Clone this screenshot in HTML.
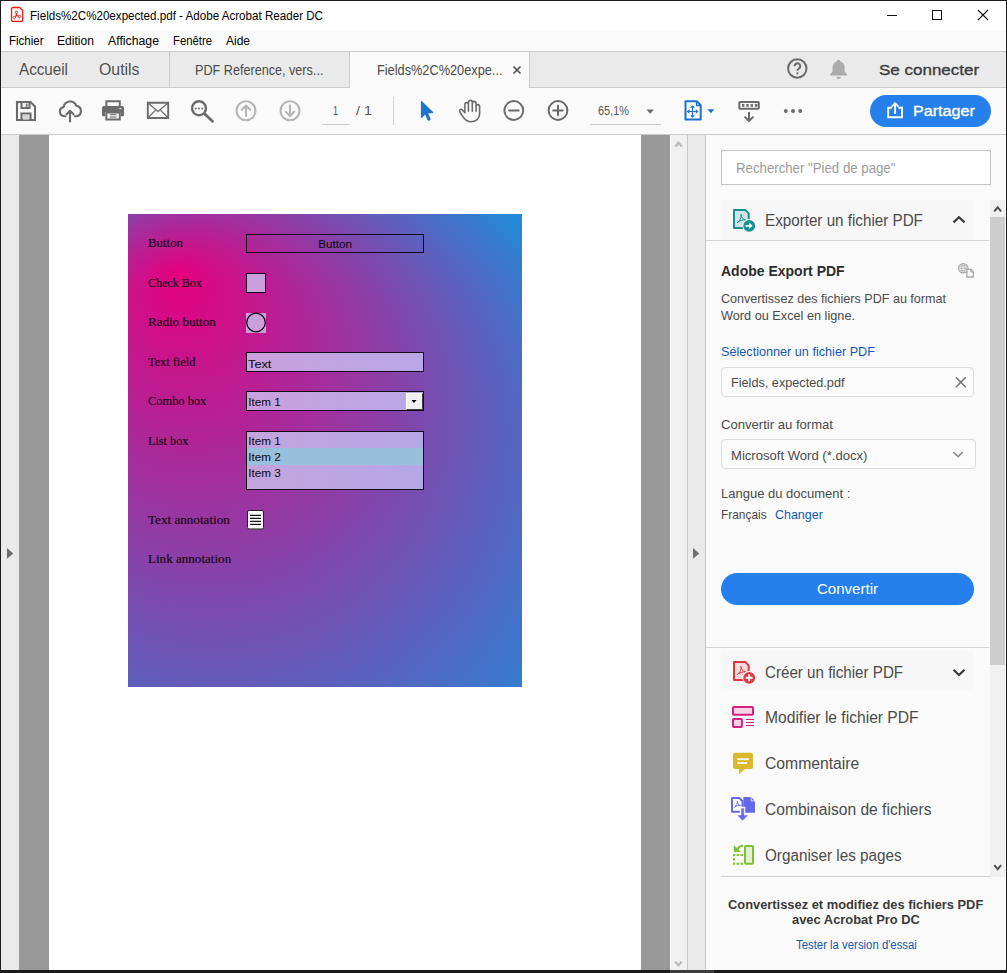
<!DOCTYPE html>
<html lang="fr">
<head>
<meta charset="utf-8">
<title>Fields%2C%20expected.pdf - Adobe Acrobat Reader DC</title>
<style>
html,body{margin:0;padding:0;}
body{width:1007px;height:973px;overflow:hidden;background:#1a1a1a;font-family:"Liberation Sans",Arial,sans-serif;}
#w{position:relative;width:1007px;height:973px;overflow:hidden;background:#1b1b1b;}
#w div,#w svg{position:absolute;}
.t{position:absolute;white-space:pre;line-height:1;transform-origin:0 50%;display:block;}
</style>
</head>
<body>
<div id="w">
<!-- window chrome -->
<div style="left:1px;top:1px;width:1005px;height:30px;background:#fff"></div>
<div style="left:1px;top:31px;width:1005px;height:20px;background:#fafafa"></div>
<div style="left:1px;top:51px;width:1005px;height:1px;background:#cbcbcb"></div>
<div style="left:1px;top:52px;width:1005px;height:35px;background:#eaeaea"></div>
<div style="left:1px;top:87px;width:1005px;height:1px;background:#cbcbcb"></div>
<div style="left:1px;top:88px;width:1005px;height:46px;background:#fafafa"></div>
<div style="left:1px;top:134px;width:1005px;height:1px;background:#cbcbcb"></div>
<div style="left:670px;top:970px;width:44px;height:3px;background:#3c3c3c"></div>
<!-- tabs -->
<div style="left:169px;top:52px;width:1px;height:35px;background:#cbcbcb"></div>
<div style="left:349px;top:52px;width:181px;height:36px;background:#cbcbcb"></div>
<div style="left:350px;top:52px;width:179px;height:36px;background:#fafafa"></div>
<!-- document area -->
<div style="left:1px;top:135px;width:18px;height:835px;background:#eaeaea"></div>
<div style="left:19px;top:135px;width:651px;height:835px;background:#999"></div>
<div style="left:49px;top:135px;width:592px;height:835px;background:#fff"></div>
<div style="left:670px;top:135px;width:17px;height:835px;background:#f0f0f0;border-left:1px solid #fbfbfb;box-sizing:border-box"></div>
<div style="left:687px;top:135px;width:1px;height:835px;background:#c8c8c8"></div>
<div style="left:688px;top:135px;width:17px;height:835px;background:#eaeaea"></div>
<div style="left:705px;top:135px;width:1px;height:835px;background:#c8c8c8"></div>
<div style="left:706px;top:135px;width:300px;height:835px;background:#fafafa"></div>
<!-- pdf page content -->
<svg style="left:128px;top:214px" width="394" height="473" viewBox="128 214 394 473">
<defs>
<radialGradient id="pg" gradientUnits="userSpaceOnUse" cx="240" cy="500" r="392" fx="176" fy="272">
<stop offset="0" stop-color="#e5007e"/>
<stop offset="1" stop-color="#2389d8"/>
</radialGradient>
</defs>
<rect x="128" y="214" width="394" height="473" fill="url(#pg)"/>
</svg>
<!-- form fields -->
<div style="left:246px;top:234px;width:176px;height:17px;border:1px solid #140a18"></div>
<div style="left:246px;top:273px;width:18px;height:18px;border:1px solid #140a18;background:#c9a0dc"></div>
<div style="left:246px;top:312.500px;width:20px;height:20px;background:#c9a0dc"></div>
<svg style="left:245px;top:311px" width="23" height="23" viewBox="245 311 23 23"><circle cx="256" cy="322.500" r="9.300" fill="none" stroke="#140a18" stroke-width="1.300"/></svg>
<div style="left:246px;top:352px;width:176px;height:18px;border:1px solid #140a18;background:linear-gradient(90deg,#c9a0dc,#b8a8e6)"></div>
<div style="left:246px;top:391px;width:176px;height:18px;border:1px solid #140a18;background:linear-gradient(90deg,#c9a0dc,#b8a8e6)"></div>
<div style="left:246px;top:431px;width:176px;height:57px;border:1px solid #140a18;background:linear-gradient(90deg,#c4a4de,#b4a8e6)"></div>
<div style="left:247px;top:448px;width:176px;height:17px;background:#97c0dc"></div>
<!-- title bar icon -->
<svg style="left:10px;top:6px" width="16" height="17" viewBox="0 0 16 17">
<path d="M3 1.500h6.700l3 3v9.400a1.500 1.500 0 0 1-1.500 1.500H3a1.500 1.500 0 0 1-1.500-1.500V3a1.500 1.500 0 0 1 1.500-1.500z" fill="#f6fbfb" stroke="#f81a10" stroke-width="1.300"/>
<g fill="none" stroke="#f81a10" stroke-width="0.900"><circle cx="6.450" cy="6.400" r="1.150"/><circle cx="4.400" cy="11.500" r="1.150"/><circle cx="9.500" cy="10.500" r="1.150"/><path d="M6.450 7.600v1.900M6.400 9.500L5.200 10.700M6.400 9.500l2.100.6" stroke-width="1.300"/></g>
</svg>
<!-- window controls -->
<svg style="left:880px;top:4px" width="120" height="24" viewBox="880 4 120 24" shape-rendering="crispEdges">
<rect x="887" y="15" width="10" height="1" fill="#111"/>
<rect x="932.500" y="10.500" width="9" height="9" fill="none" stroke="#111" stroke-width="1"/>
<path d="M978 10l10 10M988 10l-10 10" stroke="#111" stroke-width="1.100" shape-rendering="geometricPrecision" fill="none"/>
</svg>
<!-- tab close x -->
<svg style="left:512px;top:65px" width="10" height="10" viewBox="0 0 10 10"><path d="M1.500 1.500l7 7M8.500 1.500l-7 7" stroke="#555" stroke-width="1.700" fill="none"/></svg>
<!-- help + bell -->
<svg style="left:785px;top:56px" width="66" height="26" viewBox="785 56 66 26">
<circle cx="797.300" cy="68.500" r="9.200" fill="none" stroke="#6a6a6a" stroke-width="2"/>
<path d="M794.600 66.200a2.800 2.800 0 1 1 4.300 2.300c-1 .7-1.500 1.100-1.500 2.300" fill="none" stroke="#6a6a6a" stroke-width="2.100"/>
<circle cx="797.400" cy="73.300" r="1.100" fill="#6a6a6a"/>
<path d="M838.600 59.800c.9 0 1.500.6 1.500 1.400 2.900.8 4.500 3.300 4.500 6.200v4l2.600 3.200v.9h-17.200v-.9l2.600-3.200v-4c0-2.900 1.600-5.400 4.500-6.200 0-.8.600-1.400 1.500-1.400zM836.300 76.700h4.600a2.300 2.300 0 0 1-4.600 0z" fill="#ababab"/>
</svg>
<!-- toolbar icons -->
<svg style="left:1px;top:88px" width="1005" height="46" viewBox="1 88 1005 46">
<g fill="none" stroke="#6b6b6b" stroke-width="2.100" stroke-linejoin="round" stroke-linecap="round">
<!-- save -->
<path d="M17 102h13.500l4.500 4.500v13.500h-18z" stroke-linejoin="miter"/>
<path d="M21.500 102.500v5.500h8v-5.500" stroke-linejoin="miter"/>
<path d="M21.500 120v-6.500h9v6.500" stroke-linejoin="miter"/>
<!-- cloud upload -->
<path d="M65.500 116.200h-1.300a4.600 4.600 0 0 1-.6-9.100a6.600 6.600 0 0 1 12.700-1.300a5.300 5.300 0 0 1 .6 10.400h-2"/>
<path d="M70 121.500v-10M66.500 114.300l3.500-3.500l3.500 3.500"/>
<!-- mail -->
<path d="M147.800 102.700h20.400v15.300h-20.400z" stroke-linejoin="miter" stroke-width="1.900"/>
<path d="M148.300 103.200l9.700 8.300l9.700-8.300M148.300 117.500l7.200-7.400M167.700 117.500l-7.200-7.400" stroke-width="1.250"/>
<!-- magnifier -->
<circle cx="199" cy="108.300" r="7" stroke-width="2.400"/>
<path d="M204.300 113.600l8.200 7.700" stroke-width="2.700"/>
<!-- hand -->
<path d="M464.900 112.800V104.400a1.750 1.750 0 0 1 3.500 0M468.400 111.300V102.300a1.950 1.950 0 0 1 3.900 0V111.300M472.300 103.300a1.900 1.900 0 0 1 3.800 0V111.300M476.100 106.400a1.750 1.750 0 0 1 3.500 0V114C479.600 118.500 476 121.700 470.700 121.700C466.500 121.700 464.300 119.200 462.400 115.900L460 112C458.900 110.200 460.800 108.400 462.400 109.800L464.900 112.800" stroke-width="1.600"/>
<!-- zoom out/in -->
<circle cx="513.800" cy="110.500" r="9.400" stroke-width="2"/>
<path d="M509 110.500h9.600" stroke-width="2"/>
<circle cx="558" cy="110.500" r="9.400" stroke-width="2"/>
<path d="M553.200 110.500h9.600M558 105.700v9.600" stroke-width="2"/>
<!-- scrolling/keyboard icon -->
<rect x="739.300" y="102" width="19.500" height="6.800" rx="0.800" stroke-width="2"/>
<path d="M749 112v8.800M744.600 116.600l4.400 4.400l4.400-4.400" stroke-width="2" stroke-linejoin="miter" stroke-linecap="butt"/>
</g>
<g fill="#6e6e6e">
<rect x="25.800" y="103.500" width="1.700" height="3.300"/>
<rect x="23" y="115" width="6" height="4.600" fill="#d6d6d6"/>
<circle cx="195.800" cy="108.400" r="1"/><circle cx="199" cy="108.400" r="1"/><circle cx="202.200" cy="108.400" r="1"/>
<rect x="742" y="104" width="2.400" height="2.800"/><rect x="746.300" y="104" width="2.400" height="2.800"/><rect x="750.600" y="104" width="2.400" height="2.800"/><rect x="754.900" y="104" width="2.400" height="2.800"/>
<circle cx="785.800" cy="110.900" r="2"/><circle cx="793" cy="110.900" r="2"/><circle cx="800.200" cy="110.900" r="2"/>
<!-- printer -->
<path d="M106.400 106v-4.800h13.400v4.800" fill="none" stroke="#6b6b6b" stroke-width="2"/>
<path d="M104 106h18a2 2 0 0 1 2 2v7a1.200 1.200 0 0 1-1.200 1.200h-2v-4.300h-15.600v4.300h-2a1.200 1.200 0 0 1-1.200-1.200v-7a2 2 0 0 1 2-2z" fill="#6b6b6b"/>
<path d="M106.400 112.500h13.400v7h-13.400z" fill="#fff" stroke="#6b6b6b" stroke-width="2"/>
<rect x="109.700" y="114.200" width="6.800" height="1.100" fill="#6b6b6b"/><rect x="109.700" y="116.500" width="6.800" height="1.100" fill="#6b6b6b"/>
<rect x="119.300" y="108.200" width="2" height="1" fill="#fff"/>
<!-- zoom dropdown triangle -->
<path d="M646.500 109.500h7.400l-3.700 4.300z" fill="#6a6a6a"/>
</g>
<!-- up / down circles (disabled) -->
<g fill="none" stroke="#b6b6b6" stroke-width="2.100" stroke-linecap="round" stroke-linejoin="round">
<circle cx="246" cy="110.700" r="9.500"/><path d="M246 116v-10M241.800 109.700l4.200-4.200l4.200 4.200"/>
<circle cx="290" cy="110.700" r="9.500"/><path d="M290 105.500v10M285.800 111.800l4.200 4.200l4.200-4.200"/>
</g>
<!-- page number underline, separators -->
<rect x="322" y="124" width="28" height="1" fill="#c9c9c9"/>
<rect x="393" y="97" width="1" height="28" fill="#d2d2d2"/>
<rect x="590" y="124" width="71" height="1" fill="#c9c9c9"/>
<!-- select arrow -->
<path d="M420.900 101.200Q420.900 100.300 421.700 100.900L433.100 112Q433.700 112.900 432.600 113.100L428.200 113.400L430.600 118.800Q430.600 120.300 429.100 120.700Q427.800 120.700 427.300 119.800L425.200 114.500L421.800 117.900Q420.900 118.400 420.900 117.400Z" fill="#2073cc"/>
<!-- fit page icon -->
<g fill="none" stroke="#1f6fd1" stroke-width="2" stroke-linejoin="round">
<path d="M685.500 101.300h11.300l3.900 3.900v14.300h-15.200z" fill="#fafafa"/>
<path d="M696.500 101.800v3.700h3.700" stroke-width="1.300"/>
</g>
<g fill="none" stroke="#1f6fd1" stroke-width="1.200"><path d="M692.500 107v9M688.500 111.500h8.500"/></g>
<path d="M692.500 105l2.300 2.800h-4.600zM692.500 118l2.300-2.800h-4.600zM686.600 111.500l2.800-2.300v4.600zM698.600 111.500l-2.800-2.300v4.600z" fill="#1f6fd1"/>
<path d="M707.400 109.200h7l-3.500 4.100z" fill="#1f6fd1"/>
<!-- share button -->
<rect x="870" y="95" width="121" height="32" rx="16" fill="#2680eb"/>
<g fill="none" stroke="#fff" stroke-width="1.900" stroke-linejoin="miter">
<path d="M891.800 107.800h-3.600v9.400h13.800v-9.400h-3.600"/>
<path d="M895.100 114v-10M891.800 106.600l3.300-3.400l3.300 3.400" stroke-linejoin="round" stroke-linecap="butt"/>
</g>
</svg>
<!-- scrollbars & side arrows -->
<svg style="left:1px;top:135px" width="1005" height="835" viewBox="1 135 1005 835">
<path d="M675.300 146.500l3.200-3.800l3.200 3.800" fill="none" stroke="#b9b9b9" stroke-width="2.200"/>
<path d="M675.300 961.600l3.200 3.800l3.200-3.800" fill="none" stroke="#b9b9b9" stroke-width="2.200"/>
<path d="M7 548v10.800l6.200-5.400z" fill="#6e6e6e"/>
<path d="M693 548v10.800l6.200-5.400z" fill="#6e6e6e"/>
<!-- panel scrollbar -->
<rect x="990" y="200" width="15" height="677" fill="#f0f0f0"/>
<rect x="990" y="217" width="15" height="448" fill="#cdcdcd"/>
<path d="M994.300 211.300l3.400-4l3.400 4" fill="none" stroke="#505050" stroke-width="2"/>
<path d="M994.300 865.200l3.400 4l3.400-4" fill="none" stroke="#505050" stroke-width="2"/>
</svg>
<!-- right panel boxes -->
<div style="left:721px;top:150px;width:268px;height:33px;border:1px solid #c6c6c6;background:#fff"></div>
<div style="left:721px;top:200px;width:253px;height:40px;background:#f7f7f7"></div>
<div style="left:706px;top:240px;width:283px;height:1px;background:#d4d4d4"></div>
<div style="left:721px;top:367px;width:251px;height:28px;border:1px solid #dcdcdc;border-radius:4px;background:#fcfcfc"></div>
<div style="left:721px;top:439px;width:253px;height:28px;border:1px solid #dcdcdc;border-radius:4px;background:#fcfcfc"></div>
<div style="left:721px;top:573px;width:253px;height:32px;border-radius:16px;background:#2680eb"></div>
<div style="left:706px;top:647px;width:283px;height:1px;background:#d4d4d4"></div>
<div style="left:721px;top:651px;width:253px;height:40px;background:#f7f7f7"></div>
<div style="left:721px;top:876px;width:270px;height:1px;background:#d0d0d0"></div>
<!-- right panel icons -->
<svg style="left:706px;top:135px" width="284" height="835" viewBox="706 135 284 835">
<defs>
<g id="docpdf">
<path d="M734 209.900h11.200l3.500 3.500v14.500h-14.700z" stroke-width="2" stroke-linejoin="round"/>
</g>
<g id="acro" fill="none" stroke-width="1" stroke-linecap="round">
<path d="M741 214.500c.6 2.500-.6 5.500-3.600 8.200"/>
<path d="M741 214.800c.3 2.600 1.800 4.600 4.600 5.200"/>
<path d="M738.500 221.600c2.100-1.200 4.300-1.800 6.500-1.700"/>
</g>
</defs>
<!-- export -->
<use href="#docpdf" fill="#cfe4e6" stroke="#149090"/>
<use href="#acro" stroke="#149090"/>
<circle cx="749.200" cy="225.800" r="6.800" fill="#f7f7f7"/>
<circle cx="749.200" cy="225.800" r="5.900" fill="#149090"/>
<path d="M745.500 224.900h3.700v-2.100l3.500 3l-3.500 3v-2.100h-3.700z" fill="#fff"/>
<!-- chevrons -->
<path d="M953.500 222.400l5.500-5.200l5.500 5.200" fill="none" stroke="#3a3a3a" stroke-width="2.200"/>
<path d="M953.500 669.800l5.500 5.200l5.500-5.200" fill="none" stroke="#3a3a3a" stroke-width="2.200"/>
<path d="M953.300 452l4.800 4.600l4.800-4.600" fill="none" stroke="#8a8a8a" stroke-width="1.600"/>
<!-- file clear x -->
<path d="M955.800 377.300l10 10M965.800 377.300l-10 10" stroke="#6e6e6e" stroke-width="1.400" fill="none"/>
<!-- small globe/doc icon -->
<g fill="none" stroke="#a6a6a6" stroke-width="1.200">
<circle cx="963.300" cy="268.300" r="4.700"/>
<path d="M958.600 268.300h9.400M963.300 263.600c-2.400 3-2.400 6.400 0 9.400M963.300 263.600c2.400 3 2.400 6.400 0 9.400M959.500 265.900h7.600M959.500 270.700h7.600" stroke-width="0.800"/>
<path d="M966.900 269.300h4l2.400 2.400v5.300h-6.400z" fill="#fafafa" stroke-width="1.300"/>
<path d="M970.700 269.500v2.400h2.400" stroke-width="0.900"/>
</g>
<!-- create pdf -->
<g transform="translate(0,452)">
<use href="#docpdf" fill="#f7d9dc" stroke="#e0343f"/>
<use href="#acro" stroke="#e0343f"/>
<circle cx="749.200" cy="225.800" r="6.800" fill="#f7f7f7"/>
<circle cx="749.200" cy="225.800" r="5.900" fill="#e0343f"/>
<path d="M745.700 225.800h7M749.200 222.300v7" stroke="#fff" stroke-width="2" fill="none"/>
</g>
<!-- edit pdf -->
<g fill="#f5d5e6" stroke="#d6207f" stroke-width="2" stroke-linejoin="round">
<rect x="733" y="707" width="20" height="7.800" rx="0.800"/>
<rect x="733" y="719" width="8.900" height="8" rx="0.800"/>
</g>
<path d="M746 719.500h8M746 722.500h8M746 725.500h8" stroke="#d6207f" stroke-width="1.100" fill="none"/>
<!-- comment -->
<path d="M735 752.800h16a2 2 0 0 1 2 2v12.100a2 2 0 0 1-2 2h-6l-6 5.300v-5.300h-4a2 2 0 0 1-2-2v-12.100a2 2 0 0 1 2-2z" fill="#dcb92a"/>
<rect x="737.200" y="758.300" width="11.700" height="1.800" fill="#fff"/>
<rect x="737.200" y="762.200" width="9.800" height="1.800" fill="#fff"/>
<!-- combine -->
<g>
<path d="M732 798h7.300l3.200 3.200v10.600h-10.500z" fill="#fcfcfc" stroke="#6767ea" stroke-width="2" stroke-linejoin="round"/>
<path d="M743.300 797h7.200l4.500 4.500v11.300h-11.700z" fill="#6767ea"/>
<path d="M750.800 797v4.300h4.200z" fill="#fafafa"/>
<path d="M751.600 797.600v2.900h2.900z" fill="#6767ea"/>
<path d="M739.700 806.800h5.600v8.200h-5.600z" fill="#fafafa"/>
<path d="M741 808h3.200v7h4.200l-5.800 6l-5.800-6h4.200z" fill="#6767ea" stroke="#fafafa" stroke-width="0.600"/>
<g fill="none" stroke="#6767ea" stroke-width="0.900" stroke-linecap="round"><path d="M737.300 801.500c.4 1.800-.5 4-2.700 6"/><path d="M737.300 801.800c.2 1.900 1.300 3.300 3.300 3.700"/><path d="M735.500 806.600c1.500-.9 3.100-1.300 4.700-1.200"/></g>
</g>
<!-- organize -->
<rect x="745" y="846" width="8" height="17.800" rx="1" fill="#e4f0d4" stroke="#7ac231" stroke-width="2"/>
<path d="M733 854h2.200v2.200h-2.200zM736.600 854h2.600v2h-2.600zM740.500 854h2.500v2h-2.500zM733 858h2v2.600h-2zM733 862.600h2.200v2.200h-2.200zM736.600 862.800h2.600v2h-2.600zM740.500 862.800h2.500v2h-2.500z" fill="#7ac231"/>
<path d="M733.800 845v7h7l-2.300-2.300c1-1.700 2.500-2.800 4.500-3.100v-1.900c-2.700.2-4.800 1.400-6.300 3.300z" fill="#7ac231"/>
</svg>
<!-- combo box button, text annotation icon -->
<div style="left:406px;top:393px;width:15px;height:15px;background:#f0f0f0;border:1px solid;border-color:#fff #404040 #404040 #fff;box-sizing:content-box"></div>
<svg style="left:406px;top:393px" width="17" height="17" viewBox="0 0 17 17"><path d="M5.500 7h5l-2.500 3z" fill="#000"/></svg>
<svg style="left:245px;top:508px" width="22" height="24" viewBox="245 508 22 24">
<rect x="247.500" y="510.500" width="16" height="18.500" rx="1.500" fill="#fff" stroke="#222" stroke-width="1"/>
<path d="M248.500 529.300h14.500" stroke="#555" stroke-width="0.800" fill="none"/>
<path d="M250 515.300h11M250 518.300h11M250 521.300h11M250 524.300h11" stroke="#111" stroke-width="1.200" fill="none"/>
</svg>
<!-- texts -->
<span class="t" style="left:30.0px;top:10.00px;font-size:12px;color:#000;transform:scaleX(0.9675);">Fields%2C%20expected.pdf - Adobe Acrobat Reader DC</span>
<span class="t" style="left:8.5px;top:35.00px;font-size:12px;color:#000;transform:scaleX(0.9579);">Fichier</span>
<span class="t" style="left:57.0px;top:35.00px;font-size:12px;color:#000;transform:scaleX(1.0081);">Edition</span>
<span class="t" style="left:108.0px;top:35.00px;font-size:12px;color:#000;transform:scaleX(1.0235);">Affichage</span>
<span class="t" style="left:173.0px;top:35.00px;font-size:12px;color:#000;transform:scaleX(0.9430);">Fenêtre</span>
<span class="t" style="left:226.0px;top:35.00px;font-size:12px;color:#000;">Aide</span>
<span class="t" style="left:19.0px;top:61.50px;font-size:16px;color:#505050;transform:scaleX(0.9500);">Accueil</span>
<span class="t" style="left:99.0px;top:61.50px;font-size:16px;color:#505050;transform:scaleX(0.9901);">Outils</span>
<span class="t" style="left:195.4px;top:62.75px;font-size:14.5px;color:#4b4b4b;transform:scaleX(0.8707);">PDF Reference, vers...</span>
<span class="t" style="left:376.5px;top:62.75px;font-size:14.5px;color:#4b4b4b;transform:scaleX(0.8796);">Fields%2C%20expe...</span>
<span class="t" style="left:879.4px;top:61.75px;font-size:15.5px;color:#3c3c3c;-webkit-text-stroke:0.35px #3c3c3c;transform:scaleX(1.0959);">Se connecter</span>
<span class="t" style="left:912.9px;top:102.75px;font-size:15.5px;color:#fff;-webkit-text-stroke:0.35px #fff;transform:scaleX(1.0412);">Partager</span>
<span class="t" style="left:332.5px;top:105.00px;font-size:12px;color:#555;transform:scaleX(0.7477);">1</span>
<span class="t" style="left:356.0px;top:105.00px;font-size:12px;color:#555;transform:scaleX(1.1991);">/ 1</span>
<span class="t" style="left:597.9px;top:104.80px;font-size:12px;color:#555;transform:scaleX(0.9109);">65,1%</span>
<span class="t" style="left:148.0px;top:237.00px;font-size:12px;color:#160410;font-family:'Liberation Serif', 'Times New Roman', serif;-webkit-text-stroke:0.15px #160410;transform:scaleX(1.0713);">Button</span>
<span class="t" style="left:148.0px;top:277.00px;font-size:12px;color:#160410;font-family:'Liberation Serif', 'Times New Roman', serif;-webkit-text-stroke:0.15px #160410;">Check Box</span>
<span class="t" style="left:148.0px;top:316.00px;font-size:12px;color:#160410;font-family:'Liberation Serif', 'Times New Roman', serif;-webkit-text-stroke:0.15px #160410;transform:scaleX(1.0859);">Radio button</span>
<span class="t" style="left:148.0px;top:356.00px;font-size:12px;color:#160410;font-family:'Liberation Serif', 'Times New Roman', serif;-webkit-text-stroke:0.15px #160410;transform:scaleX(1.0248);">Text field</span>
<span class="t" style="left:148.0px;top:395.00px;font-size:12px;color:#160410;font-family:'Liberation Serif', 'Times New Roman', serif;-webkit-text-stroke:0.15px #160410;transform:scaleX(1.0347);">Combo box</span>
<span class="t" style="left:148.0px;top:435.00px;font-size:12px;color:#160410;font-family:'Liberation Serif', 'Times New Roman', serif;-webkit-text-stroke:0.15px #160410;transform:scaleX(1.0184);">List box</span>
<span class="t" style="left:148.0px;top:514.00px;font-size:12px;color:#160410;font-family:'Liberation Serif', 'Times New Roman', serif;-webkit-text-stroke:0.15px #160410;transform:scaleX(1.0934);">Text annotation</span>
<span class="t" style="left:148.0px;top:553.00px;font-size:12px;color:#160410;font-family:'Liberation Serif', 'Times New Roman', serif;-webkit-text-stroke:0.15px #160410;transform:scaleX(1.0900);">Link annotation</span>
<span class="t" style="left:318.2px;top:237.65px;font-size:11.7px;color:#0c0810;">Button</span>
<span class="t" style="left:248.2px;top:357.65px;font-size:11.7px;color:#0c0810;transform:scaleX(1.0915);">Text</span>
<span class="t" style="left:248.3px;top:396.25px;font-size:11.7px;color:#0c0810;">Item 1</span>
<span class="t" style="left:248.3px;top:435.15px;font-size:11.7px;color:#0c0810;">Item 1</span>
<span class="t" style="left:248.3px;top:451.15px;font-size:11.7px;color:#0c0810;">Item 2</span>
<span class="t" style="left:248.3px;top:467.15px;font-size:11.7px;color:#0c0810;">Item 3</span>
<span class="t" style="left:735.5px;top:161.00px;font-size:14px;color:#9b9b9b;transform:scaleX(0.9448);">Rechercher &quot;Pied de page&quot;</span>
<span class="t" style="left:765.4px;top:212.50px;font-size:16px;color:#4b4b4b;transform:scaleX(0.9496);">Exporter un fichier PDF</span>
<span class="t" style="left:721.0px;top:264.00px;font-size:14px;color:#2c2c2c;font-weight:700;">Adobe Export PDF</span>
<span class="t" style="left:721.0px;top:292.00px;font-size:13px;color:#4b4b4b;transform:scaleX(0.9672);">Convertissez des fichiers PDF au format</span>
<span class="t" style="left:721.0px;top:309.00px;font-size:13px;color:#4b4b4b;transform:scaleX(0.9777);">Word ou Excel en ligne.</span>
<span class="t" style="left:721.0px;top:345.00px;font-size:13px;color:#1259b5;transform:scaleX(0.9731);">Sélectionner un fichier PDF</span>
<span class="t" style="left:730.8px;top:376.00px;font-size:13px;color:#4b4b4b;transform:scaleX(0.9754);">Fields, expected.pdf</span>
<span class="t" style="left:721.0px;top:418.00px;font-size:13px;color:#4b4b4b;transform:scaleX(1.0066);">Convertir au format</span>
<span class="t" style="left:731.0px;top:449.00px;font-size:13px;color:#4b4b4b;transform:scaleX(1.0061);">Microsoft Word (*.docx)</span>
<span class="t" style="left:721.0px;top:487.00px;font-size:13px;color:#4b4b4b;">Langue du document :</span>
<span class="t" style="left:721.0px;top:508.00px;font-size:13px;color:#4b4b4b;transform:scaleX(0.9146);">Français</span>
<span class="t" style="left:774.6px;top:508.00px;font-size:13px;color:#1259b5;transform:scaleX(0.9584);">Changer</span>
<span class="t" style="left:817.2px;top:580.75px;font-size:15.5px;color:#fff;transform:scaleX(0.9699);">Convertir</span>
<span class="t" style="left:765.4px;top:664.50px;font-size:16px;color:#4b4b4b;transform:scaleX(0.9470);">Créer un fichier PDF</span>
<span class="t" style="left:765.4px;top:709.50px;font-size:16px;color:#4b4b4b;transform:scaleX(0.9760);">Modifier le fichier PDF</span>
<span class="t" style="left:765.4px;top:755.50px;font-size:16px;color:#4b4b4b;transform:scaleX(0.9820);">Commentaire</span>
<span class="t" style="left:765.4px;top:801.50px;font-size:16px;color:#4b4b4b;transform:scaleX(0.9751);">Combinaison de fichiers</span>
<span class="t" style="left:765.4px;top:847.50px;font-size:16px;color:#4b4b4b;transform:scaleX(0.9540);">Organiser les pages</span>
<span class="t" style="left:728.4px;top:898.75px;font-size:12.5px;color:#3a3a3a;font-weight:700;transform:scaleX(1.0294);">Convertissez et modifiez des fichiers PDF</span>
<span class="t" style="left:791.6px;top:913.75px;font-size:12.5px;color:#3a3a3a;font-weight:700;transform:scaleX(1.0324);">avec Acrobat Pro DC</span>
<span class="t" style="left:795.6px;top:939.00px;font-size:12px;color:#1259b5;transform:scaleX(0.9468);">Tester la version d&#x27;essai</span>
</div>
</body>
</html>
